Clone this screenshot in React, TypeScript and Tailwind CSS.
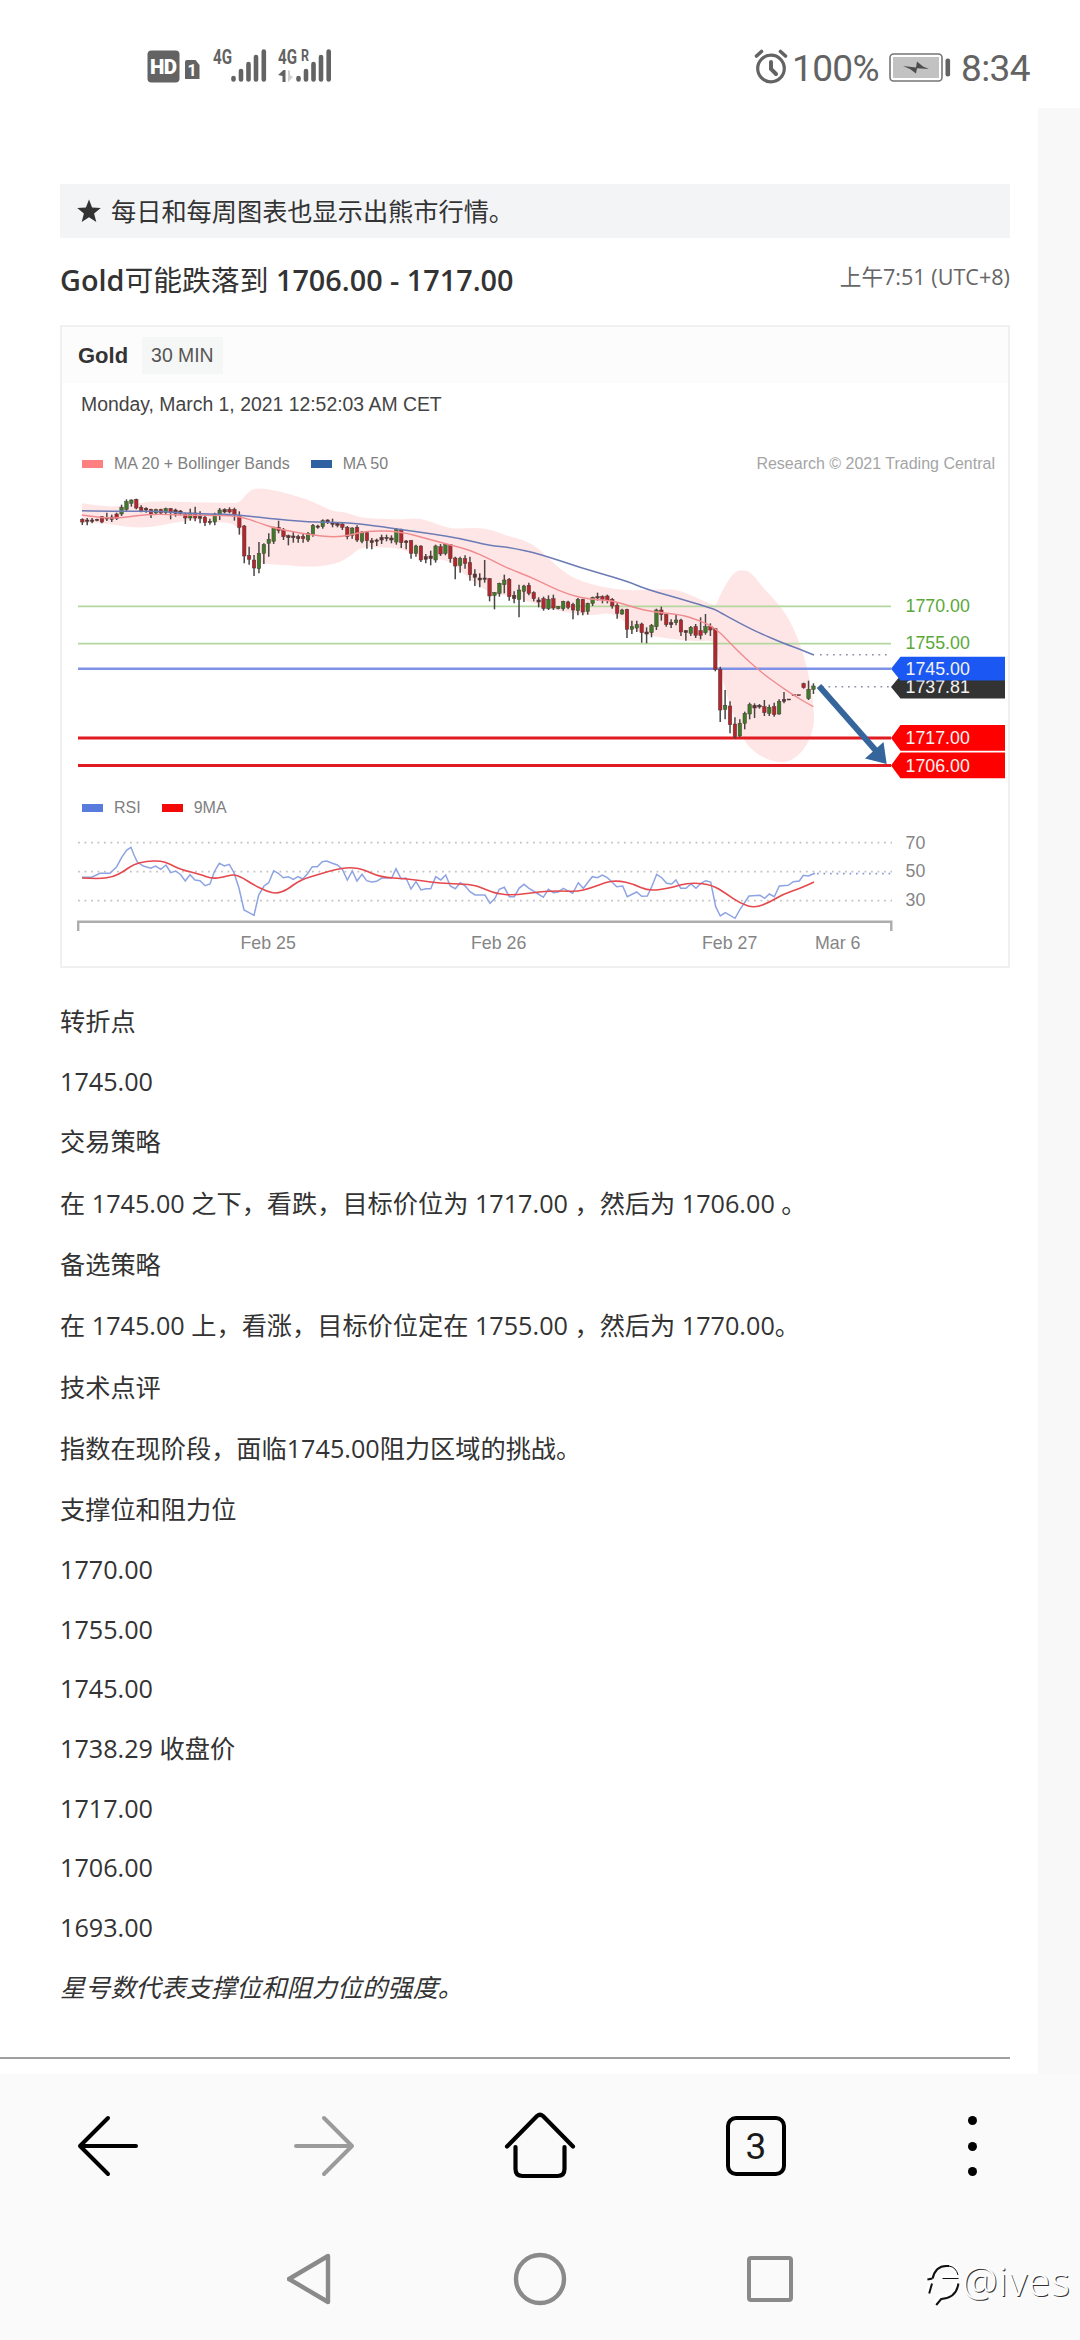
import React from 'react'

type Point = [number, number]
// high, body top, body bottom, low, kind (0 falling, 1 rising, 2 flat)
type Candle = [number, number, number, number, number]

const CANDLES_A: Candle[] = [
  [235, 238, 246, 255, 0], [234, 240, 244, 256, 2], [234, 240, 244, 250, 2], [236, 238, 241, 244, 2],
  [228, 230, 246, 250, 0], [218, 232, 237, 243, 0], [224, 231, 238, 246, 2], [218, 222, 236, 240, 0],
  [194, 202, 222, 228, 1], [178, 185, 208, 214, 1], [178, 180, 190, 200, 1], [176, 178, 204, 208, 0],
  [196, 202, 213, 217, 0], [202, 205, 210, 218, 2], [206, 208, 222, 234, 0], [206, 209, 219, 222, 1],
  [206, 209, 219, 224, 0], [203, 206, 218, 224, 1], [204, 206, 218, 238, 0], [206, 210, 220, 230, 2],
  [210, 213, 220, 226, 2], [218, 222, 234, 252, 0], [206, 219, 234, 242, 1], [200, 219, 234, 244, 0],
  [214, 230, 235, 250, 2], [228, 232, 248, 258, 0], [236, 244, 248, 254, 2], [218, 224, 246, 256, 1],
  [204, 210, 222, 240, 1], [205, 208, 216, 220, 2], [202, 208, 216, 220, 0], [203, 208, 224, 242, 0],
  [214, 228, 262, 284, 0], [255, 258, 348, 370, 0], [320, 347, 358, 374, 0], [345, 360, 384, 408, 0],
  [306, 340, 386, 400, 1], [310, 314, 340, 372, 1], [280, 298, 310, 350, 1], [260, 262, 304, 312, 1],
  [242, 262, 272, 280, 0], [264, 270, 290, 300, 0], [284, 287, 293, 316, 2], [274, 288, 293, 308, 2],
  [284, 290, 296, 308, 2], [282, 290, 296, 308, 0], [276, 280, 300, 306, 1], [252, 256, 284, 290, 1],
  [254, 258, 262, 266, 2], [238, 242, 260, 266, 1], [238, 240, 246, 252, 2], [236, 248, 253, 262, 2],
  [246, 250, 256, 262, 2], [248, 252, 262, 270, 0], [258, 262, 290, 298, 0], [262, 264, 286, 296, 1],
  [256, 262, 300, 306, 0], [274, 276, 304, 310, 1], [276, 278, 302, 326, 0], [294, 302, 308, 328, 2],
  [296, 300, 304, 318, 2], [284, 292, 300, 312, 2], [284, 292, 296, 304, 2], [286, 294, 300, 310, 2],
  [264, 268, 306, 314, 1],
]

const CANDLES_B: Candle[] = [
  [146, 150, 188, 204, 0], [180, 183, 188, 208, 2], [180, 182, 220, 236, 0], [194, 198, 220, 230, 1],
  [196, 198, 240, 246, 0], [222, 230, 238, 250, 2], [212, 228, 236, 256, 2], [194, 198, 240, 248, 1],
  [192, 200, 222, 228, 0], [190, 194, 220, 226, 1], [192, 194, 236, 248, 0], [230, 234, 258, 298, 0],
  [230, 236, 256, 278, 1], [226, 236, 250, 266, 0], [230, 248, 284, 302, 0], [268, 282, 292, 318, 2],
  [280, 294, 300, 322, 2], [240, 294, 298, 308, 2], [294, 296, 348, 364, 0], [336, 338, 346, 388, 1],
  [308, 310, 340, 350, 1], [284, 300, 314, 340, 1], [294, 298, 350, 362, 0], [334, 346, 356, 370, 2],
  [314, 330, 358, 412, 1], [314, 318, 334, 366, 1], [308, 316, 340, 346, 0], [334, 338, 356, 364, 0],
  [352, 360, 366, 382, 2], [350, 356, 386, 392, 0], [346, 358, 386, 390, 1], [344, 356, 384, 390, 0],
  [378, 380, 386, 388, 1], [362, 364, 386, 392, 1], [362, 366, 382, 388, 0], [368, 374, 390, 418, 0],
  [354, 358, 392, 406, 1], [356, 358, 396, 406, 0], [368, 370, 394, 404, 1], [350, 352, 370, 378, 1],
  [338, 350, 354, 362, 2], [346, 350, 358, 370, 0], [344, 348, 362, 370, 0], [354, 358, 378, 386, 0],
  [370, 376, 400, 416, 0], [386, 390, 402, 404, 1], [386, 388, 448, 474, 0], [422, 440, 448, 462, 1],
  [422, 434, 444, 456, 1], [428, 432, 458, 488, 0], [442, 456, 462, 490, 2], [432, 436, 458, 472, 1],
  [386, 390, 440, 450, 1], [380, 390, 404, 422, 0], [400, 404, 434, 440, 0], [418, 428, 434, 444, 2],
  [404, 420, 428, 436, 1], [416, 420, 456, 468, 0], [450, 452, 458, 482, 2], [438, 442, 460, 468, 1],
  [432, 440, 466, 474, 0], [412, 452, 466, 478, 0], [402, 440, 458, 464, 1], [430, 440, 450, 468, 0],
  [444, 446, 568, 574, 0], [560, 568, 690, 726, 0], [630, 676, 688, 718, 1], [664, 678, 734, 760, 0],
  [712, 732, 770, 776, 0],
]

const CANDLES_C: Candle[] = [
  [478, 490, 528, 532, 1], [455, 460, 490, 508, 1], [428, 434, 462, 478, 1], [430, 436, 444, 474, 2],
  [432, 436, 441, 446, 2], [420, 440, 458, 468, 0], [434, 442, 460, 468, 1], [428, 440, 464, 470, 0],
  [418, 424, 462, 464, 1], [396, 418, 424, 430, 2], [417, 417, 420, 420, 2], [404, 404, 407, 407, 0],
  [404, 404, 407, 407, 0], [368, 371, 383, 386, 0], [362, 388, 416, 420, 1], [370, 378, 388, 402, 1],
]

// the values are stored in thirds of a pixel, relative to a base
const third = (pts: Point[], bx: number, by: number): Point[] => pts.map(([x, y]) => [bx + x / 3, by + y / 3])

const toCandles = (list: Candle[], by: number): Candle[] =>
  list.map(([h, t, b, l, k]) => [by + h / 3, by + t / 3, by + b / 3, by + l / 3, k])

const candles = [...toCandles(CANDLES_A, 440), ...toCandles(CANDLES_B, 480), ...toCandles(CANDLES_C, 560)]

const ma50 = [
  ...third([[66, 212], [200, 214], [300, 214], [370, 219], [450, 222], [530, 224], [620, 235], [750, 247], [850, 246], [950, 258]], 60, 440),
  ...third([[0, 148], [100, 162], [180, 175], [270, 197], [330, 202], [420, 222], [540, 263], [680, 303], [740, 328], [840, 356], [920, 380], [950, 391]], 400, 480),
  ...third([[120, 157], [180, 190], [240, 220], [310, 250], [360, 268], [402, 285]], 680, 560),
]

const ma20 = [
  ...third([[66, 225], [110, 232], [170, 235], [230, 227], [290, 222], [400, 226], [480, 226], [540, 228], [600, 250], [650, 266], [750, 284], [820, 292], [870, 286], [920, 272]], 60, 440),
  ...third([[0, 154], [80, 176], [150, 195], [210, 210], [270, 238], [330, 268], [390, 290], [450, 320], [510, 345], [570, 358], [640, 362], [700, 382], [760, 396], [840, 403], [900, 422], [946, 444]], 400, 480),
  ...third([[140, 238], [180, 280], [240, 334], [300, 378], [350, 412], [400, 440]], 680, 560),
]

const band = [
  ...third([[66, 190], [110, 197], [180, 200], [240, 188], [300, 183], [400, 187], [500, 188], [538, 190], [560, 160], [585, 143], [640, 150], [700, 165], [760, 185], [820, 215], [860, 216], [900, 234], [990, 237]], 60, 440),
  ...third([[0, 118], [60, 114], [110, 132], [160, 148], [230, 142], [280, 150], [320, 168], [370, 178], [420, 208], [460, 250], [520, 296], [600, 320], [680, 332], [760, 328], [830, 328], [880, 348], [944, 378]], 400, 480),
  ...third([[110, 130], [130, 85], [160, 38], [185, 28], [215, 38], [250, 85], [300, 135], [340, 200], [370, 280], [390, 360], [402, 450], [402, 500], [380, 560], [340, 600], [300, 610], [240, 590], [190, 545], [150, 440], [120, 330], [106, 240]], 680, 560),
  ...third([[900, 485], [840, 480], [760, 470], [700, 450], [640, 395], [580, 408], [480, 395], [400, 370], [330, 345], [280, 345], [210, 300], [150, 240], [80, 236], [0, 205]], 400, 480),
  ...third([[960, 322], [900, 322], [870, 350], [830, 372], [750, 382], [660, 374], [600, 372], [560, 330], [530, 250], [480, 248], [420, 236], [340, 248], [270, 263], [200, 262], [140, 250], [66, 248]], 60, 440),
]

const rsi = [
  ...third([
    [66, 292], [95, 292], [120, 280], [150, 280], [170, 260], [185, 232], [200, 210], [213, 202], [222, 225], [232, 246],
    [250, 258], [272, 265], [287, 258], [302, 268], [318, 255], [332, 278], [347, 273], [362, 284], [376, 303], [390, 284],
    [405, 300], [420, 302], [435, 317], [450, 312], [463, 275], [478, 250], [493, 258], [508, 253], [522, 278], [537, 325],
    [552, 390], [567, 398], [582, 406], [596, 345], [612, 318], [626, 308], [641, 272], [655, 280], [670, 293], [685, 290],
    [700, 298], [714, 290], [728, 297], [742, 282], [757, 260], [772, 260], [787, 245], [800, 243], [815, 249], [832, 255],
    [847, 268], [862, 300], [877, 273], [891, 303], [906, 283], [920, 302], [935, 306], [950, 304], [965, 294], [995, 294],
    [1008, 266], [1023, 296], [1038, 294], [1053, 327], [1068, 305], [1083, 330], [1098, 326], [1112, 326], [1127, 290],
    [1142, 300], [1157, 285], [1171, 318], [1186, 326], [1201, 308], [1216, 318], [1230, 335], [1245, 345], [1275, 345],
    [1290, 370], [1305, 355], [1318, 328], [1333, 322], [1348, 350], [1363, 350], [1377, 325], [1392, 313], [1407, 325], [1435, 342],
  ], 60, 780),
  ...third([
    [10, 352], [25, 328], [40, 338], [55, 336], [70, 325], [98, 340], [115, 308], [130, 325], [157, 290], [172, 293],
    [187, 285], [202, 293], [216, 306], [230, 320], [248, 318], [262, 350], [290, 336], [305, 349], [322, 348], [335, 320],
    [350, 283], [365, 293], [380, 310], [395, 312], [408, 300], [422, 325], [438, 325], [453, 312], [468, 325], [483, 310],
    [497, 302], [512, 306], [527, 380], [541, 408], [556, 398], [585, 415], [600, 388], [627, 348], [660, 346], [674, 355],
    [688, 342], [703, 350], [718, 318], [745, 316], [760, 305], [778, 303], [790, 286], [805, 288], [825, 280],
  ], 540, 780),
]

const rsiMa = [
  ...third([[66, 294], [120, 297], [160, 290], [190, 275], [220, 253], [260, 244], [300, 242], [330, 252], [360, 268], [420, 283], [455, 296], [490, 292], [520, 283], [545, 292], [580, 314], [620, 334], [650, 341], [680, 330], [720, 300], [780, 282], [830, 267], [870, 262], [910, 268], [960, 292], [1040, 296], [1130, 308], [1180, 312], [1240, 314], [1280, 330], [1310, 341], [1360, 346]], 60, 780),
  ...third([[0, 335], [60, 332], [110, 335], [150, 325], [200, 306], [235, 302], [280, 312], [325, 333], [385, 325], [420, 315], [460, 308], [515, 314], [560, 342], [600, 370], [645, 384], [690, 366], [730, 342], [780, 325], [822, 306]], 540, 780),
]

const line = (pts: Point[]) => pts.map(([x, y], i) => `${i ? 'L' : 'M'}${x.toFixed(1)} ${y.toFixed(1)}`).join('')

const smooth = (pts: Point[]) => {
  let d = `M${pts[0][0]} ${pts[0][1]}`
  for (let i = 1; i < pts.length - 1; i++) {
    const [x, y] = pts[i]
    const [nx, ny] = pts[i + 1]
    d += `Q${x.toFixed(1)} ${y.toFixed(1)} ${((x + nx) / 2).toFixed(1)} ${((y + ny) / 2).toFixed(1)}`
  }
  const last = pts[pts.length - 1]
  return `${d}L${last[0].toFixed(1)} ${last[1].toFixed(1)}`
}

const CANDLE_COLORS = ['#b3262d', '#3d7a2a', '#5b3038']

const LEVELS = [
  { y: 606.3, color: '#b3d79f', width: 1.8 },
  { y: 643.6, color: '#b3d79f', width: 1.8 },
  { y: 668.7, color: '#7d92e6', width: 2.4 },
  { y: 738, color: '#e01b22', width: 3 },
  { y: 765.5, color: '#e01b22', width: 3 },
]

// the pivot tag comes after the last price, which it partly covers
const TAGS = [
  { label: '1737.81', top: 675.5, bottom: 698.5, mid: 687, color: '#333333', text: 692.5 },
  { label: '1745.00', top: 656.8, bottom: 680.5, mid: 668.7, color: '#1b57f2', text: 674.5 },
  { label: '1717.00', top: 725, bottom: 750.8, mid: 738, color: '#ff0000', text: 744 },
  { label: '1706.00', top: 752.5, bottom: 778.3, mid: 765.5, color: '#ff0000', text: 771.5 },
]

const PriceChart = () => (
  <svg width="947" height="320" viewBox="62 476 947 320" className="block">
    <path d={`${smooth(band)}Z`} fill="#ffe6e6" />
    {LEVELS.map((l) => (
      <path key={l.y} d={`M78 ${l.y}H891`} stroke={l.color} strokeWidth={l.width} />
    ))}
    {candles.map(([h, t, b, l, k], i) => {
      const x = 82.3 + i * 4.907
      return (
        <g key={i}>
          <path d={`M${x} ${h}V${l}`} stroke="#4a4644" strokeWidth={i > 143 && i < 147 ? 0 : 1.5} />
          <rect x={x - 1.75} y={t} width="3.5" height={Math.max(b - t, 1)} fill={CANDLE_COLORS[k]} stroke="#4d3a35" strokeWidth="0.5" />
        </g>
      )
    })}
    <path d={smooth(ma20)} fill="none" stroke="#f08c90" strokeWidth="1.4" />
    <path d={smooth(ma50)} fill="none" stroke="#6b7bb5" strokeWidth="1.5" />
    <path d="M820 654.7H890M822 686.8H890" stroke="#8b90a5" strokeWidth="1.5" strokeDasharray="1.7 4.8" />
    <path d="M819 686L878 753" stroke="#36659c" strokeWidth="6" />
    <path d="M883.5 742L886.7 764L865 758.5Z" fill="#36659c" />
    <g fontFamily="Liberation Sans, sans-serif" fontSize="17.8">
      <text x="905.5" y="611.8" fill="#5aa83a">1770.00</text>
      <text x="905.5" y="649" fill="#5aa83a">1755.00</text>
      {TAGS.map((t) => (
        <g key={t.label}>
          <path d={`M891 ${t.mid}L900.5 ${t.top}H1005V${t.bottom}H900.5Z`} fill={t.color} />
          <text x="905.5" y={t.text} fill="#f3f3f3">{t.label}</text>
        </g>
      ))}
    </g>
  </svg>
)

const RsiChart = () => (
  <svg width="947" height="143" viewBox="62 822 947 143" className="block">
    <path d="M78 842.7H892M78 871.6H892M78 900.6H892" stroke="#c2c2c2" strokeWidth="1.8" strokeDasharray="1.8 4.7" />
    <path d="M817 873.6H892" stroke="#8c9bd8" strokeWidth="1.6" strokeDasharray="1.7 4.8" />
    <path d={line(rsi)} fill="none" stroke="#8ea4e2" strokeWidth="1.5" />
    <path d={smooth(rsiMa)} fill="none" stroke="#e5484d" strokeWidth="1.6" />
    <path d="M78.2 931V921.8H891.3V931" fill="none" stroke="#adadad" strokeWidth="2.4" />
    <g fontFamily="Liberation Sans, sans-serif" fontSize="17.8" fill="#858585">
      <text x="905.5" y="849">70</text>
      <text x="905.5" y="876.5">50</text>
      <text x="905.5" y="905.5">30</text>
      <text x="240.5" y="949">Feb 25</text>
      <text x="471" y="949">Feb 26</text>
      <text x="702" y="949">Feb 27</text>
      <text x="815" y="949">Mar 6</text>
    </g>
  </svg>
)

const StatusBar = () => (
  <header className="flex justify-between h-[108px] pl-[147px] pr-[50px] bg-white text-[#636363]">
    <svg width="190" height="40" viewBox="147 46 190 40" className="mt-[46px]" fill="#636363">
      <rect x="147.500" y="50.500" width="32" height="32" rx="4" />
      <text x="150" y="74.200" fontFamily="Roboto, sans-serif" fontSize="20.5" fontWeight="900" fill="#fff" textLength="27">HD</text>
      <path d="M187 60h8.500l4 5v14h-14.500v-17a2 2 0 0 1 2-2z" />
      <text x="187.500" y="75.800" fontFamily="Roboto, sans-serif" fontSize="16" fontWeight="700" fill="#fff">1</text>
      <g fontFamily="Roboto, sans-serif" fontSize="19.500" fontWeight="700">
        <text x="213" y="63.500" textLength="19" lengthAdjust="spacingAndGlyphs">4G</text>
        <text x="278" y="63.500" textLength="19" lengthAdjust="spacingAndGlyphs">4G</text>
        <text x="301" y="61" fontSize="16" textLength="8" lengthAdjust="spacingAndGlyphs">R</text>
      </g>
      <path d="M233.500 79.500v-1.500M241 79.500v-8.500M248.500 79.500v-15.500M256 79.500v-22.500M263.800 79.500v-28M298.500 79.500v-1.500M306 79.500v-8.500M313.500 79.500v-15.500M321 79.500v-22.500M328.700 79.500v-28" stroke="#636363" strokeWidth="4.600" strokeLinecap="round" />
      <path d="M278 75l5.500-5h2v12h-3v-6z" />
      <path d="M288 70v12l5-5-3-2v-4z" fill="#cfcfcf" />
    </svg>
    <div className="flex items-center mt-6 font-[Roboto,sans-serif] text-[37px] leading-none">
      <svg width="34" height="36" viewBox="0 0 34 36" className="mt-0.5" fill="none" stroke="#636363" strokeLinecap="round">
        <circle cx="17" cy="19.500" r="13.300" strokeWidth="3.200" />
        <path d="M17 13v7l5 5" strokeWidth="4" />
        <path d="M2.500 7l5-4.500M31.500 7l-5-4.500" strokeWidth="3.600" />
      </svg>
      <span className="pt-1 ml-1 tracking-[-0.6px]">100%</span>
      <svg width="62" height="30" viewBox="0 0 62 30" className="mt-1 ml-2.5">
        <rect x="1" y="1" width="52" height="27" rx="3.500" fill="#fff" stroke="#757575" strokeWidth="1.600" />
        <rect x="4" y="4" width="46" height="21" fill="#c2c2c2" />
        <path d="M14 13l13 1.500 1-6 6 5 6 2.500-12-.8-1 5.300-6-4.500z" fill="#4d4d4d" />
        <rect x="56.500" y="5.500" width="4.600" height="18" rx="2" fill="#636363" />
      </svg>
      <span className="pt-1 ml-2.5 tracking-[-0.6px]">8:34</span>
    </div>
  </header>
)

const PARAGRAPHS = [
  '转折点',
  '1745.00',
  '交易策略',
  '在 1745.00 之下，看跌，目标价位为 1717.00 ，然后为 1706.00 。',
  '备选策略',
  '在 1745.00 上，看涨，目标价位定在 1755.00 ，然后为 1770.00。',
  '技术点评',
  '指数在现阶段，面临1745.00阻力区域的挑战。',
  '支撑位和阻力位',
  '1770.00',
  '1755.00',
  '1745.00',
  '1738.29 收盘价',
  '1717.00',
  '1706.00',
  '1693.00',
]

const Swatch = ({ color, label }: { color: string; label: string }) => (
  <span className="flex items-center gap-[11px]">
    <i className={`w-[21px] h-2 ${color}`} />
    {label}
  </span>
)

const BrowserBar = () => (
  <nav className="flex h-36 items-center">
    <div className="flex flex-1 justify-center">
      <svg width="64" height="64" viewBox="0 0 64 64" fill="none" stroke="#000" strokeWidth="4" strokeLinecap="round" strokeLinejoin="round">
        <path d="M60 32H4M32 4L4 32l28 28" />
      </svg>
    </div>
    <div className="flex flex-1 justify-center">
      <svg width="64" height="64" viewBox="0 0 64 64" fill="none" stroke="#9b9b9b" strokeWidth="4" strokeLinecap="round" strokeLinejoin="round">
        <path d="M4 32h56M32 4l28 28-28 28" />
      </svg>
    </div>
    <div className="flex flex-1 justify-center">
      <svg width="72" height="68" viewBox="0 0 72 68" fill="none" stroke="#000" strokeWidth="4.2" strokeLinecap="round" strokeLinejoin="round">
        <path d="M3 34.500L33 4q3-2.500 6 0l30 30.500M11.500 35v22q0 7 7 7h35q7 0 7-7V35" />
      </svg>
    </div>
    <div className="flex flex-1 justify-center">
      <div className="flex justify-center items-center w-15 h-15 border-4 border-black rounded-[10px] pt-0.5 font-[Roboto,sans-serif] text-[37px] text-[#1a1a1a]">3</div>
    </div>
    <div className="flex flex-col flex-1 items-center gap-[16.500px]">
      <i className="w-[9px] h-[9px] rounded-full bg-black" />
      <i className="w-[9px] h-[9px] rounded-full bg-black" />
      <i className="w-[9px] h-[9px] rounded-full bg-black" />
    </div>
  </nav>
)

export default function App() {
  return (
    <div className="relative flex flex-col w-[1080px] h-[2340px] overflow-hidden bg-[#fafafa] text-[#333333] font-['Open_Sans','Noto_Sans_CJK_SC',sans-serif]">
      <StatusBar />

      <div className="h-[1966px] bg-[#f8f8f8]">
        <main className="w-[1038px] h-full pt-[76px] bg-white">
          <div className="pl-[60px] pr-7">
            <div className="flex items-center h-[54px] pl-[17px] gap-2.5 bg-[#f3f4f6] text-[25.2px]">
              <svg width="24" height="24" viewBox="0 0 24 24" fill="#333">
                <path d="M12 .5l3.100 8.100 8.700.5-6.700 5.500 2.200 8.500L12 18.300 4.700 23.100l2.200-8.500L.2 9.100l8.700-.5z" />
              </svg>
              <span className="leading-9">每日和每周图表也显示出熊市行情。</span>
            </div>

            <div className="flex justify-between h-[87px] pt-[22px]">
              <h1 className="text-[28.8px] leading-[40px] font-semibold">
                Gold<span className="font-normal">可能跌落到</span> 1706.00 - 1717.00
              </h1>
              <time className="text-[21.6px] leading-[34px] text-[#666666]">上午7:51 (UTC+8)</time>
            </div>

            <section className="h-[643px] border-2 border-[#f0f0f0] font-['Liberation_Sans',sans-serif]">
              <div className="flex items-center h-14 pl-4 pt-px bg-[#fcfcfc] text-[19.4px]">
                <strong className="text-[22px]">Gold</strong>
                <span className="flex items-center h-[37px] ml-[14px] px-[9px] bg-[#f5f6f6] text-[#555]">30 MIN</span>
              </div>
              <p className="pl-[19px] pt-[9px] text-[19.4px] leading-6 text-[#444444]">Monday, March 1, 2021 12:52:03 AM CET</p>
              <div className="flex items-center justify-between h-6 mt-[36px] pl-5 pr-[13px] text-base text-[#808080]">
                <div className="flex gap-[21px]">
                  <Swatch color="bg-[#ff8080]" label="MA 20 + Bollinger Bands" />
                  <Swatch color="bg-[#3061a0]" label="MA 50" />
                </div>
                <span className="text-[#a5a5a5]">Research © 2021 Trading Central</span>
              </div>
              <PriceChart />
              <div className="flex items-center gap-[21px] h-6 mb-0.5 pl-5 text-base text-[#808080]">
                <Swatch color="bg-[#587bdd]" label="RSI" />
                <Swatch color="bg-[#f50808]" label="9MA" />
              </div>
              <RsiChart />
            </section>

            <article className="flex flex-col gap-[25.2px] pt-[35px] text-[25.2px]">
              {PARAGRAPHS.map((text, i) => (
                <p key={i} className={/^[\d.]+$/.test(text) ? 'leading-[34px]' : 'leading-[36.1px]'}>
                  {text}
                </p>
              ))}
              <p className="italic leading-[36.1px]">星号数代表支撑位和阻力位的强度。</p>
            </article>
          </div>
          <hr className="w-[1010px] mt-[52px] border-t-2 border-[#a0a0a0]" />
        </main>
      </div>

      <BrowserBar />

      <div className="flex items-center justify-center gap-[180px] h-[122px]">
        <svg width="46" height="54" viewBox="0 0 46 54" fill="none" stroke="#8a8a8a" strokeWidth="4.4" strokeLinejoin="round">
          <path d="M2 27L41 4v46z" />
        </svg>
        <svg width="54" height="54" viewBox="0 0 54 54" fill="none" stroke="#8a8a8a" strokeWidth="4.4">
          <circle cx="27" cy="27" r="24" />
        </svg>
        <i className="w-[46px] h-[46px] border-4 border-[#8a8a8a] rounded-[4px]" />
      </div>

      {/* watermark */}
      <div className="flex absolute items-center left-[924px] top-[2254px] h-[54px]">
        <svg width="38" height="50" viewBox="0 0 38 50" fill="none">
          <g stroke="#fff" strokeWidth="5">
            <path d="M2 22h6q3-13 12-14 9 0 12 9M17 20.500h16M4 36l3-10M32 25q-1 15-17 16l-4 6" />
          </g>
          <g stroke="#111">
            <path d="M3.400 23.500l5-1M8.600 22.500q3-12.500 13.500-12.500h3" strokeWidth="2.200" />
            <path d="M25 10q7 1 9 9M18.500 22.500h16" strokeWidth="1" />
            <path d="M8 27.500L5.200 37.500M34.400 27.500q-2 14.500-17.200 15.500l-5 6" strokeWidth="2" />
          </g>
        </svg>
        <span className="font-['Noto_Sans',sans-serif] font-light text-[40px] leading-none tracking-[0.8px] text-white [text-shadow:1px_1px_0_#333]">@ives</span>
      </div>
    </div>
  )
}
